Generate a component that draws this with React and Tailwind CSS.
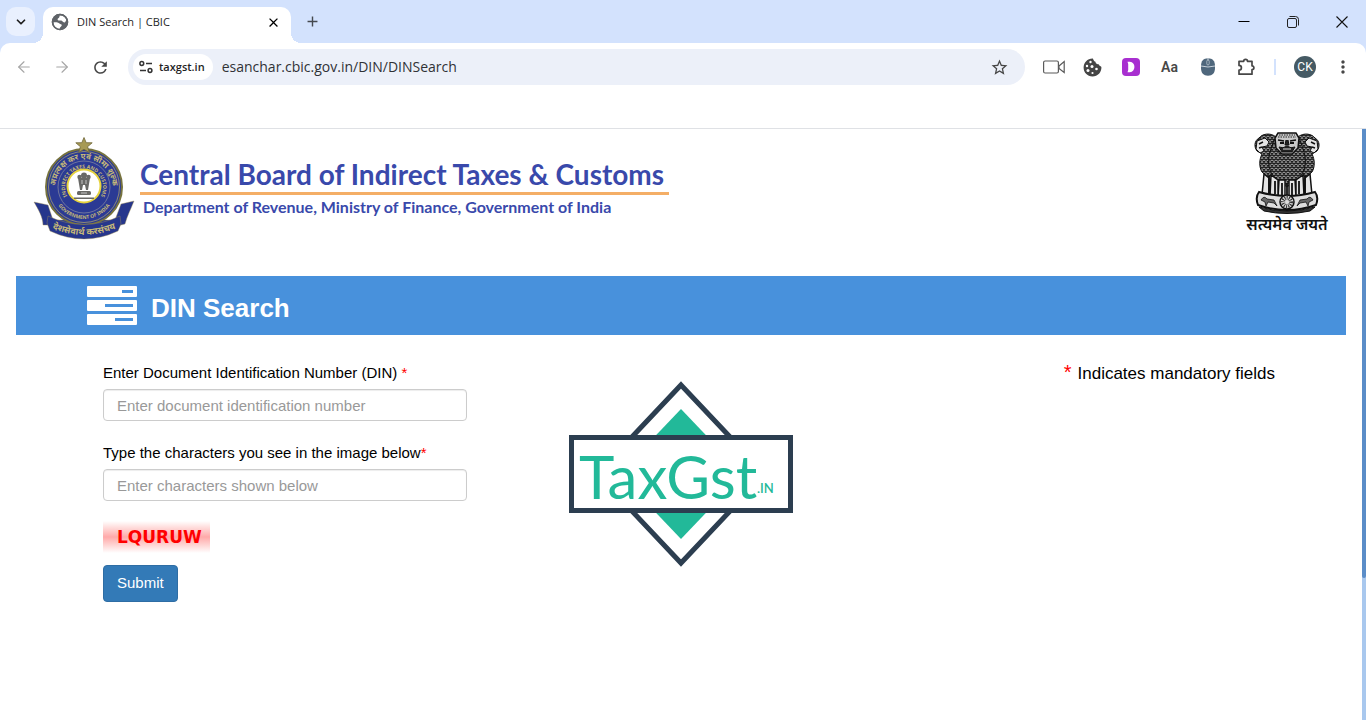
import { LuChevronDown, LuArrowLeft, LuArrowRight } from 'react-icons/lu';
import { MdClose, MdAdd, MdStarBorder, MdMoreVert, MdRefresh } from 'react-icons/md';

function TabStrip() {
  return (
    <div className="flex h-[43px] items-end bg-[#d3e2fd] text-[#1f1f1f]">
      <div className="flex h-9 w-[43px] items-start pl-[6px]">
        <button aria-label="Search tabs" className="flex h-[29px] w-[29px] items-center justify-center rounded-[10px] bg-[#e9f0fe]">
          <LuChevronDown size={14} strokeWidth={3} />
        </button>
      </div>
      <div className="relative flex h-9 w-[248px] items-center rounded-t-[10px] bg-white px-2 pb-[6px]">
        <GlobeIcon />
        <span className="ml-2 flex-1 font-['Open_Sans'] text-[11px]">DIN Search | CBIC</span>
        <button aria-label="Close tab" className="flex h-5 w-5 items-center justify-center text-black">
          <MdClose size={15} />
        </button>
        <span className="absolute bottom-0 -left-[10px] h-[10px] w-[10px] bg-[radial-gradient(circle_at_0_0,#d3e2fd_10px,white_10px)]" />
        <span className="absolute -right-[10px] bottom-0 h-[10px] w-[10px] bg-[radial-gradient(circle_at_100%_0,#d3e2fd_10px,white_10px)]" />
      </div>
      <button aria-label="New tab" className="ml-[11px] flex h-[43px] w-5 items-center justify-center text-[#45494f]">
        <MdAdd size={17} />
      </button>
      <div className="ml-auto flex h-[43px] items-center">
        <button aria-label="Minimize" className="flex w-[49px] justify-center">
          <svg width="12" height="12" viewBox="0 0 12 12"><path d="M0.5 5.5h11" stroke="#000" /></svg>
        </button>
        <button aria-label="Restore" className="flex w-[49px] justify-center">
          <svg width="12" height="12" viewBox="0 0 12 12" fill="none" stroke="#222">
            <rect x="0.5" y="2.5" width="9" height="9" rx="1.5" />
            <path d="M2.500 .5h6q3 0 3 3v6" />
          </svg>
        </button>
        <button aria-label="Close" className="flex w-[49px] justify-center">
          <svg width="12" height="12" viewBox="0 0 12 12"><path d="M0.500 0.500l11 11M11.500 0.500l-11 11" stroke="#111" strokeWidth="1.100" /></svg>
        </button>
      </div>
    </div>
  );
}

function GlobeIcon() {
  return (
    <svg width="18" height="18" viewBox="0 0 18 18">
      <circle cx="9" cy="9" r="8.200" fill="#5f6368" />
      <path d="M2.500 9.200c2 .3 4.500-.4 6 1.300.6.900 2.300.4 2.300 1.800-.2 1.300-1.700 1.200-2.300 3.700-3.500 0-6-3.300-6-6.800z" fill="#fff" />
      <path d="M8.500 2.500c3-.5 6 1.500 7 4.700-1 .3-.8 2.300-2.200 2.300-1.600.1-1.800-1.800-3.300-1.900-1.600-.1-3.300.2-3.400-1.200 0-1.300 2.400-1.400 1.900-3.900z" fill="#fff" />
      <circle cx="9" cy="9" r="7.500" fill="none" stroke="#5f6368" strokeWidth="1.600" />
    </svg>
  );
}

function Toolbar() {
  return (
    <div className="bg-[#d3e2fd]">
      <div className="flex h-[85px] items-start rounded-t-[10px] bg-white pt-[6px] text-[#474747]">
        <div className="flex h-9 w-[128px] items-center">
          <button aria-label="Back" className="flex w-[47px] justify-center text-[#a5a5a5]"><LuArrowLeft size={18} strokeWidth={1.5} /></button>
          <button aria-label="Forward" className="flex w-[30px] justify-center text-[#a5a5a5]"><LuArrowRight size={18} strokeWidth={1.5} /></button>
          <button aria-label="Reload" className="flex w-[47px] justify-center"><MdRefresh size={19} /></button>
        </div>
        <div className="flex h-9 flex-1 items-center rounded-full bg-[#ecf0f9] pr-4 pl-[5px]">
          <button className="flex h-[26px] items-center gap-[6px] rounded-full bg-white pr-2 pl-[6px] font-['Open_Sans'] text-[11px] font-semibold text-[#1f1f1f]">
            <svg width="14" height="14" viewBox="0 0 14 14" fill="none" stroke="#333" strokeWidth="1.500">
              <circle cx="2.800" cy="3.500" r="1.900" />
              <path d="M7 3.500h6M1 10.500h6" />
              <circle cx="11" cy="10.500" r="1.900" />
            </svg>
            taxgst.in
          </button>
          <input aria-label="Address" defaultValue="esanchar.cbic.gov.in/DIN/DINSearch" className="ml-[9px] flex-1 bg-transparent font-['Open_Sans'] text-sm text-[#303236] outline-none" />
          <button aria-label="Bookmark this page"><MdStarBorder size={19} /></button>
        </div>
        <div className="flex h-9 w-[341px] items-center pl-[18px]">
          <button aria-label="Camera" className="mr-[18px]">
            <svg width="22" height="14" viewBox="0 0 22 14" fill="none" stroke="#5a5a5a" strokeWidth="1.200">
              <rect x="0.600" y="1" width="14.800" height="12" rx="1.500" />
              <path d="M16 6l5.200-4.500v11L16 8.500z" />
            </svg>
          </button>
          <button aria-label="Cookies" className="mr-5"><CookieIcon /></button>
          <button aria-label="Dictionary" className="mr-5">
            <svg width="18" height="18" viewBox="0 0 18 18">
              <rect width="18" height="18" rx="4" fill="#a82fd0" />
              <path d="M5.500 3.800h2.300c6.200 0 6.200 10.400 0 10.400H5.500l.7-2.200V6z" fill="#fff" />
            </svg>
          </button>
          <button className="mr-5 w-[19px] font-['Roboto'] text-sm font-semibold">Aa</button>
          <button aria-label="Mouse" className="mr-5">
            <svg width="18" height="18" viewBox="0 0 18 18">
              <path d="M2 8C2 3 4.500.300 9 .300s7 2.700 7 7.700v2c0 5-2.500 7.700-7 7.700S2 15 2 10z" fill="#4f677c" />
              <path d="M2 8q7 2 14 0M9 0v6" fill="none" stroke="#d5dde4" strokeWidth=".9" />
              <rect x="7.800" y="2" width="2.400" height="5" rx="1.200" fill="#4f677c" stroke="#d5dde4" strokeWidth=".6" />
            </svg>
          </button>
          <button aria-label="Extensions" className="mr-[18px]">
            <svg width="19" height="18" viewBox="0 0 19 18" fill="none" stroke="#474747" strokeWidth="1.700" strokeLinejoin="round">
              <path d="M2 3.300h4.700a1.900 1.900 0 0 1 3.800 0h4.500v4.500a1.900 1.900 0 0 1 0 3.800v4.600H2v-4a2.400 2.400 0 0 0 0-4.800z" />
            </svg>
          </button>
          <span className="h-4 w-[2px] bg-[#d3e2fd]" />
          <button className="ml-[18px] h-[22px] w-[22px] rounded-full bg-[#455a64] font-['Roboto'] text-xs text-white">CK</button>
          <button aria-label="Menu" className="ml-[17px]"><MdMoreVert size={20} /></button>
        </div>
      </div>
      <div className="h-px bg-[#dfe1e5]" />
    </div>
  );
}

function CookieIcon() {
  return (
    <svg width="19" height="19" viewBox="0 0 19 19">
      <path d="M9.500.6c1 0 .8 2.800 3 3.200.2 2.400 2 2.300 3.400 2.700.2 1.800 2.300 1.600 2.500 2.400.4 5-3.600 9.500-8.900 9.500S.6 14.300.6 9.500 4.500.6 9.500.6z" fill="#454545" />
      <g fill="#fff">
        <circle cx="7.500" cy="4" r="1.200" /><circle cx="4" cy="8" r="1.200" /><circle cx="9" cy="8.500" r="1.500" />
        <circle cx="5" cy="12.500" r="1.500" /><circle cx="9.500" cy="15" r="1.100" /><circle cx="13.500" cy="11" r="1.300" />
      </g>
    </svg>
  );
}

function CbicSeal() {
  return (
    <svg width="102" height="106" viewBox="0 0 102 106" className="shrink-0">
      <path d="M1 65l14 3 5 15 62 0 6-16 13-3c-3 8-7 15-9 23l-4 1-7-1-2 7c-17 8-38 8-56 0l-2-7-6 1-5 0c0-8-5-16-9-23z" fill="#26368c" stroke="#a79655" strokeWidth=".4" />
      <circle cx="51" cy="50" r="38" fill="#2b3a94" stroke="#77733f" strokeWidth="2" />
      <circle cx="51" cy="50" r="35.500" fill="none" stroke="#b6aa6d" strokeWidth=".7" />
      <circle cx="51" cy="50" r="26" fill="none" stroke="#7f83a0" strokeWidth=".8" />
      <path d="M15 79q36 17 72 0l1 8-3 7q-34 16-68 0l-3-8z" fill="#26368c" stroke="#a79655" strokeWidth=".4" />
      <path id="ringTop" d="M23.500 58a28.500 28.500 0 1 1 55 0" fill="none" />
      <path id="ringMid" d="M35 60.500a19 19 0 1 1 32 0" fill="none" />
      <path id="ringBottom" d="M20 56a31.500 31.500 0 0 0 62 0" fill="none" />
      <path id="ribbon" d="M18 91q33 14 66 0" fill="none" />
      <g fill="#c5b878" fontFamily="Noto Sans, sans-serif" fontWeight="700" textAnchor="middle">
        <text fontSize="8"><textPath href="#ringTop" startOffset="50%">अप्रत्यक्ष कर एवं सीमा शुल्क</textPath></text>
        <text fontSize="5"><textPath href="#ringMid" startOffset="50%">INDIRECT TAXES AND CUSTOMS</textPath></text>
        <text fontSize="5"><textPath href="#ringBottom" startOffset="50%">GOVERNMENT OF INDIA</textPath></text>
        <text fontSize="9"><textPath href="#ribbon" startOffset="50%">देशसेवार्थ करसंचय</textPath></text>
      </g>
      <circle cx="51" cy="49" r="16.500" fill="#fff" stroke="#e6d23d" strokeWidth="2" />
      <g fill="#686866">
        <circle cx="51" cy="38.500" r="3" /><circle cx="46.500" cy="40" r="2.200" /><circle cx="55.500" cy="40" r="2.200" />
        <path d="M45 41h12l-1 6-1 6h-2l-1-5h-2l-1 5h-2l-1-6z" />
        <rect x="44" y="54" width="14" height="4" rx="1.500" />
        <rect x="41" y="60.500" width="20" height="1.500" />
      </g>
      <path d="M49 43v4M53 43v4M48 56h6" stroke="#ddd" strokeWidth=".8" />
      <path d="M51 .5l2.200 5.200 6 .1-4.600 3.900 1.700 5.800L51 12.300l-5.300 3.200 1.700-5.800-4.600-3.900 6-.1z" fill="#a79a55" stroke="#6f6637" strokeWidth=".8" />
    </svg>
  );
}

function AshokaEmblem() {
  return (
    <svg width="86" height="104" viewBox="0 0 86 104" className="overflow-visible" role="img" aria-label="State emblem of India">
      <defs>
        <pattern id="mane" width="4" height="4" patternUnits="userSpaceOnUse">
          <rect width="4" height="4" fill="#1d1d1d" />
          <path d="M0 1q2 3 4 0M-1 3.500q1.500 1.500 3 0M2 3.500q1.500 1.500 3 0" stroke="#c4c4c4" strokeWidth=".8" fill="none" />
        </pattern>
      </defs>
      {/* side lions */}
      <path d="M32 6c-6-5-14-3-17 1-5 3-5 9-2 13l5 3c-3 6-3 13 0 18l6 5 12-6V14z" fill="url(#mane)" stroke="#111" />
      <path d="M54 6c6-5 14-3 17 1 5 3 5 9 2 13l-5 3c3 6 3 13 0 18l-6 5-12-6V14z" fill="url(#mane)" stroke="#111" />
      <path d="M13 10l8-3 4 4-2 4-5 1 2 4-4 2-4-4z" fill="#e4e4e4" stroke="#111" />
      <path d="M73 10l-8-3-4 4 2 4 5 1-2 4 4 2 4-4z" fill="#e4e4e4" stroke="#111" />
      <path d="M15 13l4-2M71 13l-4-2M15 17l3-1M71 17l-3-1" stroke="#111" strokeWidth="1.500" />
      {/* front lion */}
      <path d="M30 9q13-9 26 0l4 12c3 10 1 20-5 26l-12 9-12-9c-6-6-8-16-5-26z" fill="url(#mane)" stroke="#111" />
      <path d="M34 2h18l3 5-1 10-6 6H38l-6-6-1-10z" fill="#c9c9c9" stroke="#111" strokeWidth="1.500" />
      <path d="M35 4h16M34 6h18" stroke="#222" strokeDasharray="1.500 1" />
      <path d="M34 9l6 1M46 10l6-1" stroke="#111" strokeWidth="1.500" />
      <path d="M36 12h4M46 12h4" stroke="#111" strokeWidth="2" />
      <path d="M42 9l-1 5h4l-1-5M35 16q4 2 8-1 4 3 8 1l-3 5H38z" fill="#222" stroke="#111" />
      <path d="M39 18h8" stroke="#ddd" />
      {/* legs */}
      <path d="M20 43l5 4v17l-7 0zM66 43l-5 4v17l7 0zM27 44l7 5v16h-8zM59 44l-7 5v16h8zM35 49h6v18h-7zM51 49h-6v18h7z" fill="#e5e5e5" stroke="#111" strokeWidth="1.500" />
      <path d="M25 45v17M31 50v13M38 52v12M43 52v16M48 52v12M55 50v13M61 45v17" stroke="#111" strokeWidth="1.800" />
      {/* abacus */}
      <path d="M15 61q28 8 56 0 4 5 1 13-29 10-58 0-3-8 1-13z" fill="#ddd" stroke="#111" strokeWidth="2" />
      <circle cx="43" cy="71" r="7" fill="#ddd" stroke="#111" strokeWidth="1.500" />
      <circle cx="43" cy="71" r="4" fill="none" stroke="#333" strokeWidth="4" strokeDasharray="1 1" />
      <path d="M17 69q3-5 6-1l7 1 3 6-3-3-6-1-2 4-1-4zM69 69q-3-5-6-1l-7 1-3 6 3-3 6-1 2 4 1-4z" fill="#666" stroke="#111" strokeWidth=".8" />
      <path d="M15 76q28 8 56 0l-5 4q-23 5-46 0z" fill="#333" stroke="#111" />
      <text x="43" y="99" textAnchor="middle" fontFamily="Noto Sans, sans-serif" fontSize="16" fontWeight="600" fill="#111">सत्यमेव जयते</text>
    </svg>
  );
}

function PageHeader() {
  return (
    <header className="flex items-start pt-[2px] pr-[32px] pl-[33px]">
      <div className="pt-[6px]"><CbicSeal /></div>
      <div className="ml-[5px] pt-[25px] font-['Lato'] font-bold text-[#3949ab]">
        <h1 className="text-[28px] leading-9 whitespace-nowrap">Central Board of Indirect Taxes &amp; Customs</h1>
        <div className="h-[3px] w-[529px] bg-[#f4ae66]" />
        <p className="pl-[3px] text-base leading-6 whitespace-nowrap">Department of Revenue, Ministry of Finance, Government of India</p>
      </div>
      <div className="ml-auto"><AshokaEmblem /></div>
    </header>
  );
}

function TaxGstLogo() {
  return (
    <svg width="224" height="186" viewBox="0 0 224 186" role="img" aria-label="TaxGst.in">
      <path d="M112 4L196 93l-84 89L28 93z" fill="none" stroke="#2c3e50" strokeWidth="5" />
      <path d="M112 28l62 65-62 65-62-65z" fill="#22b999" />
      <rect x="2.500" y="56.500" width="219" height="73" fill="#fff" stroke="#2c3e50" strokeWidth="5" />
      <text x="10" y="118" fill="#22b999" fontFamily="Lato, sans-serif" fontSize="60">TaxGst</text>
      <text x="188" y="112" fill="#22b999" fontFamily="Lato, sans-serif" fontSize="13" fontWeight="600">.IN</text>
    </svg>
  );
}

function ServerIcon() {
  return (
    <svg width="50" height="39" viewBox="0 0 50 39" fill="#fff">
      <path fillRule="evenodd" d="M1 0h48q1 0 1 1v9q0 1-1 1H1q-1 0-1-1V1q0-1 1-1zM35 4v3h11V4z" />
      <path fillRule="evenodd" d="M1 14h48q1 0 1 1v9q0 1-1 1H1q-1 0-1-1v-9q0-1 1-1zM18 18v3h28v-3z" />
      <path fillRule="evenodd" d="M1 28h48q1 0 1 1v9q0 1-1 1H1q-1 0-1-1v-9q0-1 1-1zM28 32v3h18v-3z" />
    </svg>
  );
}

function Field({ id, label, placeholder }) {
  return (
    <div className="mb-5">
      <label htmlFor={id} className="block text-[15px] leading-6">
        {label}<span className="text-[#f00]">*</span>
      </label>
      <input
        id={id}
        type="text"
        placeholder={placeholder}
        className="mt-1 block h-8 w-full rounded-[4px] border border-[#ccc] px-[13px] text-[15px] shadow-[inset_0_1px_1px_rgba(0,0,0,0.075)] placeholder:text-[#999]"
      />
    </div>
  );
}

export default function App() {
  return (
    <div className="flex min-h-screen flex-col bg-white">
      <TabStrip />
      <Toolbar />
      <div className="flex flex-1">
        <main className="flex-1 font-['Liberation_Sans',sans-serif] text-black">
          <PageHeader />
          <section className="mx-4 mt-[33px]">
            <div className="flex h-[59px] items-center bg-[#4891dc] pl-[71px]">
              <ServerIcon />
              <h2 className="ml-[14px] pt-[6px] text-[26px] font-bold text-white">DIN Search</h2>
            </div>
            <div className="grid grid-cols-[1fr_auto_1fr] items-start">
              <form className="w-[451px] pt-[26px] pl-[87px]" onSubmit={(e) => e.preventDefault()}>
                <Field id="din" label="Enter Document Identification Number (DIN) " placeholder="Enter document identification number" />
                <Field id="captcha" label="Type the characters you see in the image below" placeholder="Enter characters shown below" />
                <div className="h-8 w-[107px] bg-linear-to-b from-white via-[#ffa9a9] to-white pl-[14px] font-['DejaVu_Sans'] text-[17px] leading-8 font-bold text-[#f00]">
                  LQURUW
                </div>
                <button type="submit" className="mt-3 h-[37px] rounded-[4px] border border-[#2e6da4] bg-[#337ab7] px-[13px] text-[15px] text-white">
                  Submit
                </button>
              </form>
              <div className="pt-[46px]"><TaxGstLogo /></div>
              <p className="flex justify-end gap-[6px] pt-[27px] pr-[71px] text-[17px] leading-6">
                <span className="text-xl leading-5 text-[#f00]">*</span>
                Indicates mandatory fields
              </p>
            </div>
          </section>
        </main>
        <div className="w-1 bg-[#a9c8ee]">
          <div className="h-[76%] rounded-b-sm bg-[#5b8dc8]" />
        </div>
      </div>
    </div>
  );
}
